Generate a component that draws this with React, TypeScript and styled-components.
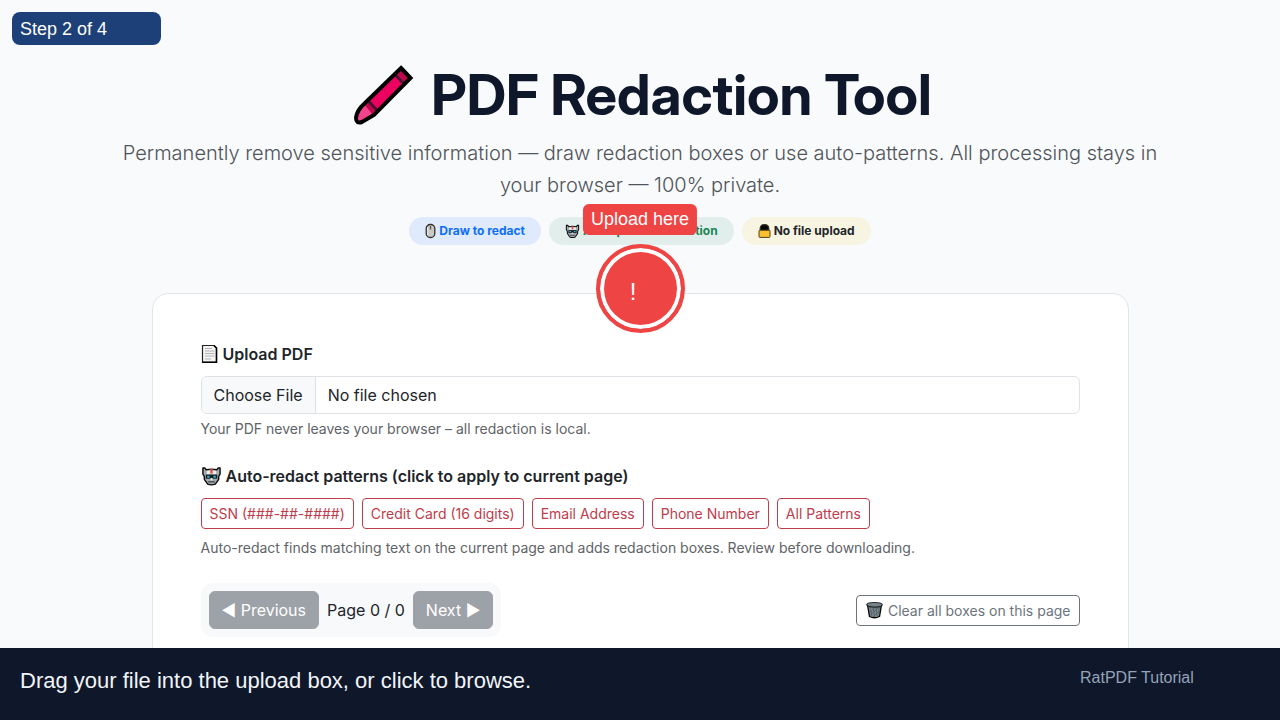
import React from 'react';
import styled, { createGlobalStyle } from 'styled-components';

const GlobalStyle = createGlobalStyle`
  *, *::before, *::after { box-sizing: border-box; }
  body {
    margin: 0;
    background: #f8fafc;
    color: #212529;
    font-family: Inter, "Liberation Sans", sans-serif;
    font-size: 16px;
    line-height: 24px;
  }
`;

const Page = styled.main`
  max-width: 1073px;
  margin: 0 auto;
  padding: 62px 12px 24px;
`;

const Hero = styled.header`
  display: flex;
  flex-direction: column;
  align-items: center;
  text-align: center;
`;

const Title = styled.h1`
  display: flex;
  align-items: center;
  justify-content: center;
  gap: 16px;
  margin: 0 0 8px;
  color: #0f172a;
  font-family: "Inter Display", Inter, "Liberation Sans", sans-serif;
  font-size: 56px;
  font-weight: 700;
  font-variation-settings: "opsz" 32;
  line-height: 67px;
`;

const Lead = styled.p`
  margin: 0 0 16px;
  color: #4f5459;
  font-size: 20px;
  font-weight: 300;
  line-height: 32px;
`;

const Badges = styled.div`
  display: flex;
  flex-wrap: wrap;
  justify-content: center;
  gap: 8px;
  margin-bottom: 48px;
`;

const Badge = styled.span<{ $bg: string; $fg: string }>`
  display: inline-flex;
  align-items: center;
  gap: 3px;
  padding: 6px 16px;
  border-radius: 14px;
  background: ${(p) => p.$bg};
  color: ${(p) => p.$fg};
  font-size: 12px;
  font-weight: 700;
  line-height: 16px;
`;

const Card = styled.section`
  position: relative;
  margin: 0 36px;
  padding: 48px;
  border: 1px solid #e2e6ea;
  border-radius: 16px;
  background: #fff;
`;

const Field = styled.div`
  margin-bottom: 25px;
`;

const labelStyles = `
  display: flex;
  align-items: center;
  gap: 4px;
  margin: 0 0 10px;
  font-size: 16px;
  font-weight: 600;
  line-height: 24px;
`;

const Label = styled.label`${labelStyles}`;
const GroupLabel = styled.h2`${labelStyles}`;

const FileInput = styled.input`
  display: block;
  width: 100%;
  height: 38px;
  padding: 6px 12px;
  overflow: hidden;
  border: 1px solid #dee2e6;
  border-radius: 6px;
  background: #fff;
  color: #212529;
  font: inherit;

  &::file-selector-button {
    margin: -6px 12px -6px -12px;
    padding: 6px 12px;
    border: 0 solid #dee2e6;
    border-right-width: 1px;
    background: #f8f9fa;
    color: #212529;
    font: inherit;
  }
`;

const Hint = styled.p<{ $gap: number }>`
  margin: ${(p) => p.$gap}px 0 0;
  color: #5f6468;
  font-size: 14px;
  line-height: 21px;
`;

const Row = styled.div<{ $between?: boolean }>`
  display: flex;
  flex-wrap: wrap;
  align-items: center;
  justify-content: ${(p) => (p.$between ? 'space-between' : 'flex-start')};
  gap: 8px;
`;

const OutlineButton = styled.button<{ $color: string }>`
  display: inline-flex;
  align-items: center;
  gap: 4px;
  padding: 4px 8px;
  border: 1px solid ${(p) => p.$color};
  border-radius: 4px;
  background: transparent;
  color: ${(p) => p.$color};
  font: 14px/21px Inter, "Liberation Sans", sans-serif;
`;

const Pager = styled.nav`
  display: flex;
  align-items: center;
  gap: 8px;
  padding: 8px;
  border-radius: 12px;
  background: #f8f9fa;
`;

const PagerButton = styled.button`
  padding: 6px 12px;
  border: 1px solid #9da2a8;
  border-radius: 6px;
  background: #9da2a8;
  color: #fff;
  font: 16px/24px Inter, "DejaVu Sans", sans-serif;
`;

const Marker = styled.div`
  position: absolute;
  top: -50px;
  left: 50%;
  display: flex;
  align-items: center;
  justify-content: center;
  width: 89px;
  height: 89px;
  margin-left: -44px;
  padding: 6px 15px 0 0;
  border: 4px solid #ef4444;
  border-radius: 50%;
  background: #ef4444;
  box-shadow: inset 0 0 0 4px #fff;
  color: #fff;
  font: 24px/28px "Liberation Sans", sans-serif;
`;

const Callout = styled.div`
  position: absolute;
  top: -90px;
  left: 50%;
  padding: 5px 8px;
  border-radius: 6px;
  background: #ef4444;
  color: #fff;
  font: 18px/21px "Liberation Sans", sans-serif;
  white-space: nowrap;
  transform: translateX(-50%);
`;

const Step = styled.div`
  position: fixed;
  top: 12px;
  left: 12px;
  min-width: 149px;
  padding: 7px 8px 5px;
  border-radius: 8px;
  background: #1e4079;
  color: #fff;
  font: 18px/21px "Liberation Sans", sans-serif;
`;

const Caption = styled.footer`
  position: fixed;
  inset: auto 0 0;
  display: flex;
  align-items: flex-start;
  justify-content: space-between;
  min-height: 72px;
  padding: 20px 0 20px 20px;
  background: #0f172a;
  color: #f1f5f9;
  font: 22px/25px "Liberation Sans", sans-serif;
`;

const Brand = styled.span`
  width: 200px;
  color: #94a3b8;
  font-size: 16px;
  line-height: 19px;
`;

const Icon = styled.svg`
  display: block;
  flex: none;
`;

const Crayon = () => (
  <Icon width="67" height="66" viewBox="0 0 67 66" aria-hidden="true">
    <path d="M53 5 L62.5 15 L26 52 L14 59 Q8 61 8 55 Q9 47 16 41 Z" fill="#ec0160" />
    <path d="M53 5 L62.5 15 L57 20.5 L47.5 10.5 Z" fill="#c1084e" />
    <path d="M20.5 36.5 L30 47 L24 52 L14 43 Z" fill="#c1084e" />
    <path d="M16 41 L24 51 L14 59 Q8 61 8 55 Q9 47 16 41 Z" fill="#f2438b" />
    <path d="M20 37.5 L29 47.5 M47 11.5 L56.5 21.5" stroke="#4b1330" strokeWidth="3" />
    <path d="M53 5 L62.5 15 L26 52 L14 59 Q8 61 8 55 Q9 47 16 41 Z" fill="none" stroke="#000" strokeWidth="4" />
  </Icon>
);

const Mouse = () => (
  <Icon width="11" height="16" viewBox="0 0 11 16" aria-hidden="true">
    <rect x="1.2" y="1.5" width="8.6" height="13" rx="4" fill="#c9c8c5" stroke="#33312e" strokeWidth="1.3" />
    <path d="M2.7 4 V12" stroke="#eeeeec" strokeWidth="1" />
    <path d="M5.5 3 V6.5" stroke="#55534f" strokeWidth="1.3" />
  </Icon>
);

const Robot = ({ size }: { size: number }) => (
  <Icon width={size} height={size} viewBox="0 0 22 22" aria-hidden="true">
    <path d="M2 2 H4 L5.5 4 Q11 2.6 16.5 4 L18 2 H20 V8.5 L18.5 11 V14 L15 19 Q11 20.6 7 19 L3.5 14 V11 L2 8.5 Z" fill="#a3abb0" stroke="#0c0c0c" strokeWidth="1.5" strokeLinejoin="round" />
    <path d="M6 5 H16 V8.6 H6Z" fill="#e8edef" />
    <path d="M11 3.2 V8" stroke="#e34d35" strokeWidth="2.4" />
    <path d="M5 9 H17 V13.3 H5Z" fill="#15191c" />
    <path d="M6.5 11.2 H9 M13 11.2 H15.5" stroke="#2cb6da" strokeWidth="2" />
    <path d="M10 12.5 H12 V15 H10Z" fill="#e8edef" />
    <path d="M7.5 16.6 H14.5" stroke="#3b4246" strokeWidth="1.3" />
  </Icon>
);

const Lock = () => (
  <Icon width="13" height="16" viewBox="0 0 13 16" aria-hidden="true">
    <path d="M2.2 8 V5.2 Q2.6 1.6 6.5 1.6 Q10.4 1.6 10.8 5.2 V8Z" fill="#050505" stroke="#34312c" strokeWidth="1.2" />
    <rect x="1" y="7.2" width="11" height="7.2" rx="1" fill="#fbc02f" stroke="#51401a" strokeWidth="1" />
  </Icon>
);

const Sheet = () => (
  <Icon width="18" height="20" viewBox="0 0 18 20" aria-hidden="true">
    <path d="M1.5 1.5 H13 L15.5 4 V18.3 H1.5Z" fill="#f4f4f4" stroke="#222" strokeWidth="1.2" />
    <path d="M13 1.5 L15.5 4 V18.3 H1.5" fill="none" stroke="#000" strokeWidth="1.5" />
    <path d="M4 4.5 H11 M4 7 H13.5 M4 9.5 H13.5 M4 12 H13.5 M4 15 H10" stroke="#b3b3b3" strokeWidth="1" />
  </Icon>
);

const Trash = () => (
  <Icon width="19" height="18" viewBox="0 0 19 18" aria-hidden="true">
    <path d="M2.5 4 L4.5 15.5 Q9.5 18 14.5 15.5 L16.5 4Z" fill="#7c898e" stroke="#050505" strokeWidth="1.3" />
    <path d="M5 6 L7 15.5 M8 6 L9.5 16 M11 6 L12 15.5 M14 6 L14 14 M14 6 L5.5 14 M10.5 6 L5 11 M14 10 L8 16" stroke="#4c585d" strokeWidth=".7" />
    <ellipse cx="9.5" cy="3.8" rx="7.7" ry="2.3" fill="#859297" stroke="#1d2326" strokeWidth="1.2" />
    <path d="M4 4 H15" stroke="#667378" strokeWidth="1" />
  </Icon>
);

const patterns = [
  'SSN (###-##-####)',
  'Credit Card (16 digits)',
  'Email Address',
  'Phone Number',
  'All Patterns',
];

export default function App() {
  return (
    <>
      <GlobalStyle />
      <Page>
        <Hero>
          <Title><Crayon />PDF Redaction Tool</Title>
          <Lead>
            Permanently remove sensitive information — draw redaction boxes or use auto-patterns. All
            processing stays in your browser — 100% private.
          </Lead>
          <Badges>
            <Badge $bg="#dfeafc" $fg="#0d6efd"><Mouse />Draw to redact</Badge>
            <Badge $bg="#e1eeeb" $fg="#198754"><Robot size={15} />Auto-pattern detection</Badge>
            <Badge $bg="#f7f4e2" $fg="#212529"><Lock />No file upload</Badge>
          </Badges>
        </Hero>
        <Card>
          <Field>
            <Label htmlFor="pdf"><Sheet />Upload PDF</Label>
            <FileInput id="pdf" type="file" accept="application/pdf" />
            <Hint $gap={4}>Your PDF never leaves your browser – all redaction is local.</Hint>
          </Field>
          <Field>
            <GroupLabel><Robot size={21} />Auto-redact patterns (click to apply to current page)</GroupLabel>
            <Row>
              {patterns.map((name) => (
                <OutlineButton key={name} type="button" $color="#bf3c4b">{name}</OutlineButton>
              ))}
            </Row>
            <Hint $gap={8}>
              Auto-redact finds matching text on the current page and adds redaction boxes. Review before
              downloading.
            </Hint>
          </Field>
          <Row $between>
            <Pager aria-label="Pages">
              <PagerButton type="button" disabled>◀ Previous</PagerButton>
              <span>Page 0 / 0</span>
              <PagerButton type="button" disabled>Next ▶</PagerButton>
            </Pager>
            <OutlineButton type="button" $color="#6c757d"><Trash />Clear all boxes on this page</OutlineButton>
          </Row>
          <Callout>Upload here</Callout>
          <Marker>!</Marker>
        </Card>
      </Page>
      <Step>Step 2 of 4</Step>
      <Caption>
        <span>Drag your file into the upload box, or click to browse.</span>
        <Brand>RatPDF Tutorial</Brand>
      </Caption>
    </>
  );
}
